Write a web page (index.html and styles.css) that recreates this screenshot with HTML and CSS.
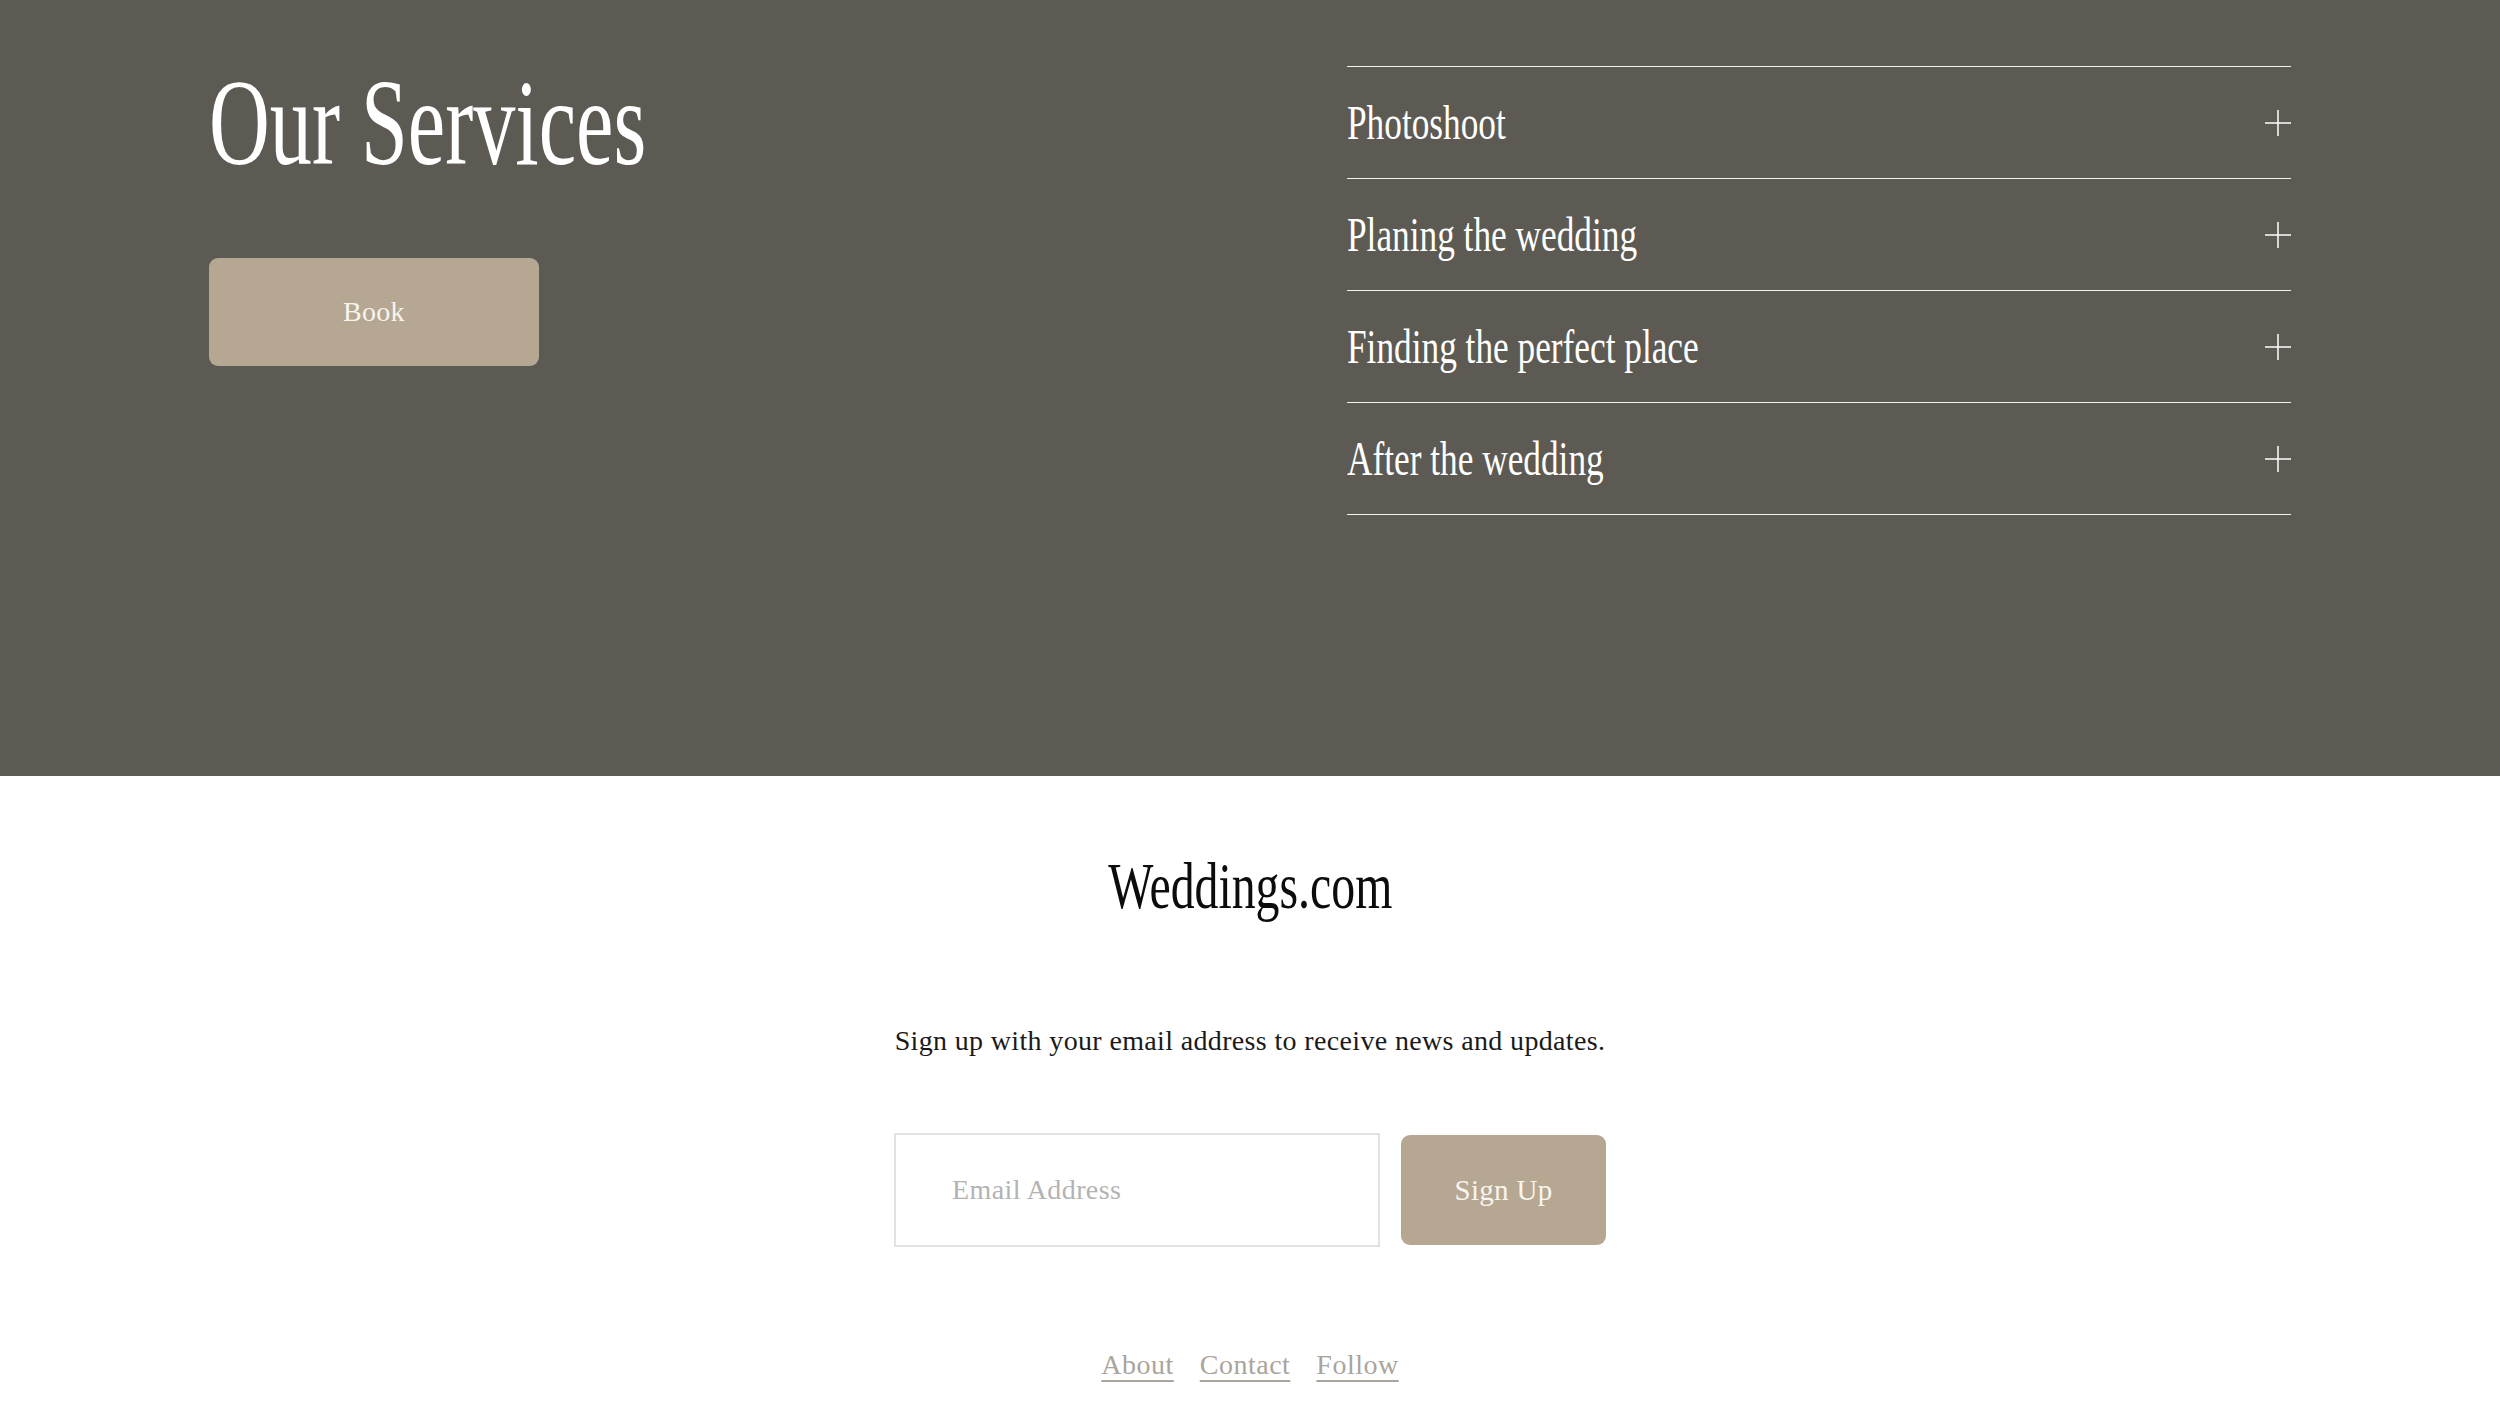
FILE: index.html
```html
<!DOCTYPE html>
<html lang="en">
<head>
  <meta charset="UTF-8">
  <title>Weddings.com - Our Services</title>
  <link rel="stylesheet" href="styles.css">
</head>
<body>
  <!-- Services -->
  <section class="services">
    <div class="services-inner">
      <div class="services-intro">
        <h1 class="services-title"><span class="condensed">Our Services</span></h1>
        <a class="btn btn-book" href="#">Book</a>
      </div>

      <ul class="accordion">
        <li class="accordion-item">
          <span class="condensed">Photoshoot</span>
          <svg class="plus" viewBox="0 0 26 26" width="26" height="26"><path d="M13 0v26M0 13h26"/></svg>
        </li>
        <li class="accordion-item">
          <span class="condensed">Planing the wedding</span>
          <svg class="plus" viewBox="0 0 26 26" width="26" height="26"><path d="M13 0v26M0 13h26"/></svg>
        </li>
        <li class="accordion-item">
          <span class="condensed">Finding the perfect place</span>
          <svg class="plus" viewBox="0 0 26 26" width="26" height="26"><path d="M13 0v26M0 13h26"/></svg>
        </li>
        <li class="accordion-item">
          <span class="condensed">After the wedding</span>
          <svg class="plus" viewBox="0 0 26 26" width="26" height="26"><path d="M13 0v26M0 13h26"/></svg>
        </li>
      </ul>
    </div>
  </section>

  <!-- Footer / newsletter -->
  <footer class="footer">
    <div class="brand"><span class="condensed">Weddings.com</span></div>
    <p class="signup-text">Sign up with your email address to receive news and updates.</p>
    <form class="signup-form">
      <input class="email-input" type="email" placeholder="Email Address">
      <button class="btn btn-signup" type="button">Sign Up</button>
    </form>
    <nav class="footer-links">
      <a href="#">About</a>
      <a href="#">Contact</a>
      <a href="#">Follow</a>
    </nav>
  </footer>
</body>
</html>
```

FILE: styles.css
```css
/* Global */
* { margin: 0; padding: 0; box-sizing: border-box; }
body {
  font-family: "Liberation Serif", "Times New Roman", serif;
  color: #111;
  background: #fff;
}
a { color: inherit; }
ul { list-style: none; }

/* squeeze the serif into a condensed display face */
.condensed {
  display: inline-block;
  transform: scaleX(0.735);
  transform-origin: left center;
  white-space: nowrap;
}

/* ----------------- Services ----------------- */
.services {
  background: #5c5a53;
  color: #fff;
  height: 776px;
  padding-top: 62px;
}
.services-inner {
  width: 2082px;
  margin: 0 auto;
  display: grid;
  grid-template-columns: 1fr 944px;
}
.services-intro {
  display: flex;
  flex-direction: column;
  align-items: flex-start;
}
.services-title {
  font-weight: 400;
  font-size: 122px;
  line-height: 1;
}
.services-title .condensed { transform: scaleX(0.69); }

.btn {
  display: flex;
  align-items: center;
  justify-content: center;
  background: #b6a793;
  color: #f8f4ee;
  border: none;
  border-radius: 9px;
  font-family: inherit;
  text-decoration: none;
  cursor: pointer;
}
.btn-book {
  margin-top: 74px;
  width: 330px;
  height: 108px;
  font-size: 28px;
  letter-spacing: 0.3px;
}

/* accordion */
.accordion {
  margin-top: 4px;
  border-bottom: 1px solid #f4f2ee;
}
.accordion-item {
  height: 112px;
  border-top: 1px solid #f4f2ee;
  display: flex;
  align-items: center;
  justify-content: space-between;
  font-size: 48px;
  line-height: 1;
}
.plus {
  stroke: #fff;
  stroke-width: 1.5;
  fill: none;
}

/* ----------------- Footer ----------------- */
.footer {
  padding: 78px 0 120px;
  display: flex;
  flex-direction: column;
  align-items: center;
}
.brand {
  font-size: 65px;
  line-height: 1;
  color: #0c0c0c;
}
.brand .condensed { transform-origin: center; }

.signup-text {
  margin-top: 101px;
  font-size: 28px;
  letter-spacing: 0.35px;
  line-height: 1.5;
  color: #1a1a1a;
}
.signup-form {
  margin-top: 71px;
  display: flex;
  align-items: center;
  gap: 21px;
}
.email-input {
  width: 486px;
  height: 114px;
  border: 2px solid #e2e2e2;
  padding: 0 56px;
  font-family: inherit;
  font-size: 28px;
  letter-spacing: 0.4px;
  color: #333;
  outline: none;
}
.email-input::placeholder { color: #b3b3b3; }
.btn-signup {
  width: 205px;
  height: 110px;
  font-size: 29px;
  letter-spacing: 0.3px;
}

.footer-links {
  margin-top: 97px;
  display: flex;
  gap: 26px;
  font-size: 28px;
  letter-spacing: 0.5px;
  line-height: 1.5;
}
.footer-links a {
  color: #aaa59c;
  text-decoration: underline;
  text-decoration-thickness: 2px;
  text-underline-offset: 6px;
}
```
